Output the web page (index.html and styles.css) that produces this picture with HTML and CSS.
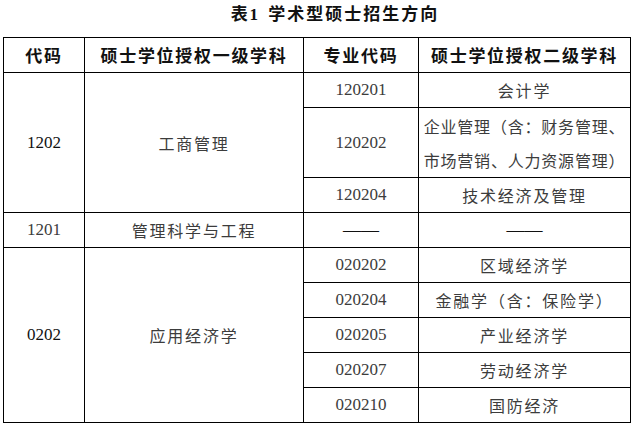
FILE: index.html
```html
<!DOCTYPE html>
<html lang="zh">
<head>
<meta charset="utf-8">
<title>表1 学术型硕士招生方向</title>
<link rel="stylesheet" href="styles.css">
</head>
<body>
<div class="title">表1 学术型硕士招生方向</div>
<table class="grid">
  <colgroup>
    <col class="c1"><col class="c2"><col class="c3"><col class="c4">
  </colgroup>
  <thead>
    <tr><th>代码</th><th>硕士学位授权一级学科</th><th>专业代码</th><th>硕士学位授权二级学科</th></tr>
  </thead>
  <tbody>
    <tr><td rowspan="3" class="code dark">1202</td><td rowspan="3" class="cn">工商管理</td><td class="code">120201</td><td class="cn">会计学</td></tr>
    <tr class="tall"><td class="code">120202</td><td class="cn tight">企业管理（含：财务管理、<br>市场营销、人力资源管理）</td></tr>
    <tr><td class="code">120204</td><td class="cn">技术经济及管理</td></tr>
    <tr><td class="code">1201</td><td class="cn">管理科学与工程</td><td class="dash">——</td><td class="dash">——</td></tr>
    <tr><td rowspan="5" class="code dark">0202</td><td rowspan="5" class="cn">应用经济学</td><td class="code">020202</td><td class="cn">区域经济学</td></tr>
    <tr><td class="code">020204</td><td class="cn">金融学（含：保险学）</td></tr>
    <tr><td class="code">020205</td><td class="cn">产业经济学</td></tr>
    <tr><td class="code">020207</td><td class="cn">劳动经济学</td></tr>
    <tr><td class="code">020210</td><td class="cn">国防经济</td></tr>
  </tbody>
</table>
</body>
</html>
```
FILE: styles.css
```css
html, body {
  margin: 0;
  padding: 0;
  background: #fff;
}
body {
  width: 634px;
  height: 427px;
  overflow: hidden;
  font-family: "Noto Sans CJK SC", "Noto Sans", sans-serif;
  color: #3c3c3c;
}
.title {
  height: 37px;
  box-sizing: border-box;
  padding: 4px 0 0 36px;
  text-align: center;
  font-family: "Liberation Serif", "Noto Sans CJK SC", serif;
  font-weight: bold;
  font-size: 17px;
  line-height: 22px;
  letter-spacing: 2px;
  word-spacing: 2px;
  color: #111;
}
.grid {
  margin-left: 3px;
  border-collapse: collapse;
  table-layout: fixed;
  width: 627px;
}
.c1 { width: 81px; }
.c2 { width: 219px; }
.c3 { width: 115px; }
.c4 { width: 212px; }
.grid th, .grid td {
  border: 1px solid #000;
  padding: 0;
  text-align: center;
  vertical-align: middle;
  height: 34px;
}
.grid th {
  font-family: "Noto Sans CJK SC", sans-serif;
  font-weight: bold;
  font-size: 17px;
  letter-spacing: 1.7px;
  color: #111;
  line-height: 20px;
}
.grid tr.tall td {
  height: 69px;
}
.code {
  font-family: "Liberation Serif", serif;
  font-size: 17px;
  color: #3c3c3c;
}
.code.dark {
  color: #111;
}
.cn {
  font-size: 16px;
  letter-spacing: 1.8px;
  line-height: 20px;
}
.cn.tight {
  letter-spacing: 0.8px;
  line-height: 34px;
  white-space: nowrap;
}
.dash {
  font-family: "Liberation Serif", serif;
  font-size: 18px;
  color: #111;
  letter-spacing: 0;
}
```
